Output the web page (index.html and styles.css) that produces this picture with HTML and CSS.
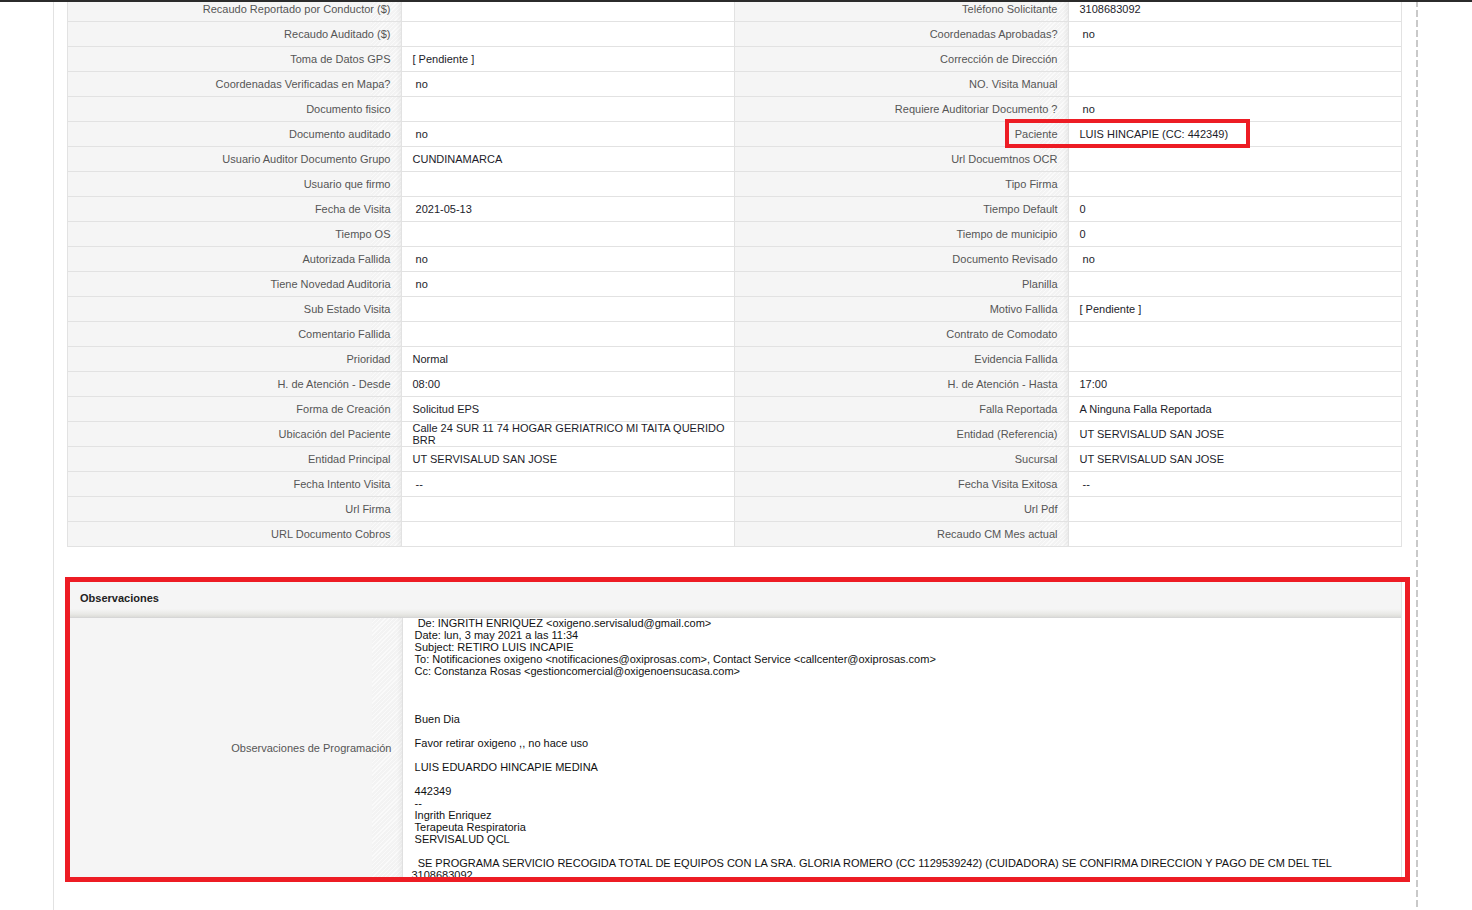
FILE: index.html
```html
<!DOCTYPE html>
<html lang="es">
<head>
<meta charset="utf-8">
<title>Detalle de Visita</title>
<link rel="stylesheet" href="styles.css">
</head>
<body>
<div class="topbar"></div>
<div class="page">
  <table class="detail">
    <colgroup><col><col><col><col></colgroup>
    <tbody>
      <tr><td class="lbl">Recaudo Reportado por Conductor ($)</td><td class="val"></td><td class="lbl">Teléfono Solicitante</td><td class="val">3108683092</td></tr>
      <tr><td class="lbl">Recaudo Auditado ($)</td><td class="val"></td><td class="lbl">Coordenadas Aprobadas?</td><td class="val">&nbsp;no</td></tr>
      <tr><td class="lbl">Toma de Datos GPS</td><td class="val">[ Pendiente ]</td><td class="lbl">Corrección de Dirección</td><td class="val"></td></tr>
      <tr><td class="lbl">Coordenadas Verificadas en Mapa?</td><td class="val">&nbsp;no</td><td class="lbl">NO. Visita Manual</td><td class="val"></td></tr>
      <tr><td class="lbl">Documento fisico</td><td class="val"></td><td class="lbl">Requiere Auditoriar Documento ?</td><td class="val">&nbsp;no</td></tr>
      <tr><td class="lbl">Documento auditado</td><td class="val">&nbsp;no</td><td class="lbl anchor">Paciente<span class="mark"></span></td><td class="val">LUIS HINCAPIE (CC: 442349)</td></tr>
      <tr><td class="lbl">Usuario Auditor Documento Grupo</td><td class="val">CUNDINAMARCA</td><td class="lbl">Url Docuemtnos OCR</td><td class="val"></td></tr>
      <tr><td class="lbl">Usuario que firmo</td><td class="val"></td><td class="lbl">Tipo Firma</td><td class="val"></td></tr>
      <tr><td class="lbl">Fecha de Visita</td><td class="val">&nbsp;2021-05-13</td><td class="lbl">Tiempo Default</td><td class="val">0</td></tr>
      <tr><td class="lbl">Tiempo OS</td><td class="val"></td><td class="lbl">Tiempo de municipio</td><td class="val">0</td></tr>
      <tr><td class="lbl">Autorizada Fallida</td><td class="val">&nbsp;no</td><td class="lbl">Documento Revisado</td><td class="val">&nbsp;no</td></tr>
      <tr><td class="lbl">Tiene Novedad Auditoria</td><td class="val">&nbsp;no</td><td class="lbl">Planilla</td><td class="val"></td></tr>
      <tr><td class="lbl">Sub Estado Visita</td><td class="val"></td><td class="lbl">Motivo Fallida</td><td class="val">[ Pendiente ]</td></tr>
      <tr><td class="lbl">Comentario Fallida</td><td class="val"></td><td class="lbl">Contrato de Comodato</td><td class="val"></td></tr>
      <tr><td class="lbl">Prioridad</td><td class="val">Normal</td><td class="lbl">Evidencia Fallida</td><td class="val"></td></tr>
      <tr><td class="lbl">H. de Atención - Desde</td><td class="val">08:00</td><td class="lbl">H. de Atención - Hasta</td><td class="val">17:00</td></tr>
      <tr><td class="lbl">Forma de Creación</td><td class="val">Solicitud EPS</td><td class="lbl">Falla Reportada</td><td class="val">A Ninguna Falla Reportada</td></tr>
      <tr><td class="lbl">Ubicación del Paciente</td><td class="val">Calle 24 SUR 11 74 HOGAR GERIATRICO MI TAITA QUERIDO BRR</td><td class="lbl">Entidad (Referencia)</td><td class="val">UT SERVISALUD SAN JOSE</td></tr>
      <tr><td class="lbl">Entidad Principal</td><td class="val">UT SERVISALUD SAN JOSE</td><td class="lbl">Sucursal</td><td class="val">UT SERVISALUD SAN JOSE</td></tr>
      <tr><td class="lbl">Fecha Intento Visita</td><td class="val">&nbsp;--</td><td class="lbl">Fecha Visita Exitosa</td><td class="val">&nbsp;--</td></tr>
      <tr><td class="lbl">Url Firma</td><td class="val"></td><td class="lbl">Url Pdf</td><td class="val"></td></tr>
      <tr><td class="lbl">URL Documento Cobros</td><td class="val"></td><td class="lbl">Recaudo CM Mes actual</td><td class="val"></td></tr>
    </tbody>
  </table>

  <div class="panel">
    <div class="panel-head">Observaciones</div>
    <table class="obs">
      <tbody>
        <tr>
          <td class="lbl obs-lbl">Observaciones de Programación</td>
          <td class="obs-val"><div class="obs-text">  De: INGRITH ENRIQUEZ &lt;oxigeno.servisalud@gmail.com&gt;
 Date: lun, 3 may 2021 a las 11:34
 Subject: RETIRO LUIS INCAPIE
 To: Notificaciones oxigeno &lt;notificaciones@oxiprosas.com&gt;, Contact Service &lt;callcenter@oxiprosas.com&gt;
 Cc: Constanza Rosas &lt;gestioncomercial@oxigenoensucasa.com&gt;



 Buen Dia

 Favor retirar oxigeno ,, no hace uso

 LUIS EDUARDO HINCAPIE MEDINA

 442349
 --
 Ingrith Enriquez
 Terapeuta Respiratoria
 SERVISALUD QCL

  SE PROGRAMA SERVICIO RECOGIDA TOTAL DE EQUIPOS CON LA SRA. GLORIA ROMERO (CC 1129539242) (CUIDADORA) SE CONFIRMA DIRECCION Y PAGO DE CM DEL TEL 3108683092</div></td>
        </tr>
      </tbody>
    </table>
  </div>
</div>
</body>
</html>
```
FILE: styles.css
```css
html, body {
  margin: 0;
  padding: 0;
  background: #ffffff;
  font-family: "Liberation Sans", Arial, sans-serif;
  font-size: 11px;
  color: #222222;
  overflow: hidden;
}

.topbar {
  position: fixed;
  top: 0;
  left: 0;
  right: 0;
  height: 2px;
  background: #2b2b2b;
  z-index: 10;
}

.page {
  display: flow-root;
  position: relative;
  margin-left: 53px;
  width: 1351px;
  min-height: 100vh;
  border-left: 1px solid #e2e2e2;
  padding: 0 14px 0 13px;
  box-sizing: content-box;
  background-image: repeating-linear-gradient(to bottom, #c9c9c9 0, #c9c9c9 7px, transparent 7px, transparent 10px);
  background-size: 2px 100%;
  background-repeat: no-repeat;
  background-position: 1362px 0;
}

.detail {
  width: 1335px;
  margin-top: -4px;
  border-collapse: collapse;
  table-layout: fixed;
  border: 1px solid #e0e0e0;
}

.detail td {
  height: 25px;
  padding: 0 2px 0 11px;
  border: 1px solid #e2e2e2;
  line-height: 12px;
  vertical-align: middle;
  box-sizing: border-box;
}

.lbl {
  text-align: right;
  color: #555555;
  background-color: #f5f5f5;
  background-image:
    linear-gradient(to right, rgba(0,0,0,0) 0, rgba(0,0,0,0) calc(100% - 5px), rgba(0,0,0,0.045) 100%),
    repeating-linear-gradient(135deg, rgba(255,255,255,0.5) 0, rgba(255,255,255,0.5) 1px, rgba(238,238,238,0.3) 1px, rgba(238,238,238,0.3) 3px);
  background-size: 100% 100%, 30px 100%;
  background-position: 0 0, right 0;
  background-repeat: no-repeat;
}

.detail td.lbl {
  padding: 0 10px 0 6px;
}

.val {
  text-align: left;
  color: #1c1c2a;
  background: #ffffff;
}

.anchor {
  position: relative;
}

.mark {
  position: absolute;
  left: 270px;
  top: -3px;
  width: 245px;
  height: 29px;
  border: 4px solid #ed1c24;
  box-sizing: border-box;
}

.panel {
  position: relative;
  width: 1335px;
  margin-top: 32px;
  border: 1px solid #e0e0e0;
  box-sizing: border-box;
}

.panel::after {
  content: "";
  position: absolute;
  left: -3px;
  right: -9px;
  top: -3px;
  bottom: -4px;
  border: 5px solid #ed1c24;
  pointer-events: none;
}

.panel-head {
  height: 37px;
  padding-left: 12px;
  line-height: 37px;
  font-weight: bold;
  color: #222222;
  background: linear-gradient(to bottom, #f5f5f5 0, #f5f5f5 78%, #e9e9e6 92%, #dcdcd8 100%);
  border-bottom: 1px solid #d6d6d6;
}

.obs {
  width: 100%;
  border-collapse: collapse;
  table-layout: fixed;
}

.obs-lbl {
  width: 334px;
  padding: 0 10px 0 6px;
  border-right: 1px solid #e0e0e0;
  vertical-align: middle;
  box-sizing: border-box;
}

.obs-val {
  padding: 0;
  vertical-align: top;
  background: #ffffff;
}

.obs-text {
  height: 261px;
  margin-top: -1px;
  overflow: hidden;
  padding: 0 30px 0 9px;
  white-space: pre-wrap;
  line-height: 12px;
  color: #111111;
}
```
